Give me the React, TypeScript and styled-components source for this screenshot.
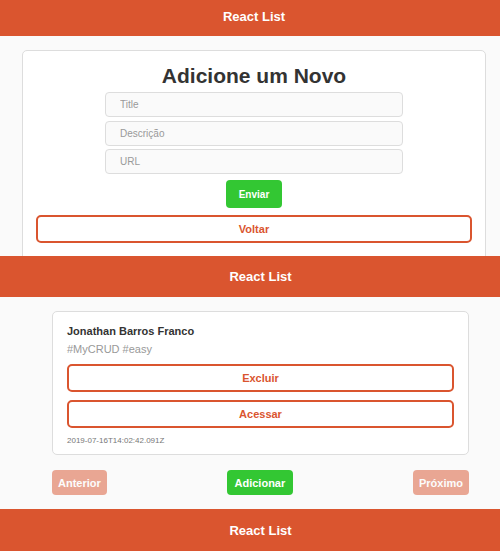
import styled, { createGlobalStyle } from 'styled-components';

const GlobalStyle = createGlobalStyle`
  * {
    box-sizing: border-box;
  }

  body {
    margin: 0;
    background: #fafafa;
    font-family: "Liberation Sans", Arial, Helvetica, sans-serif;
    overflow: hidden;
  }
`;

const Page = styled.div`
  width: 500px;
  overflow: hidden;
`;

const Section = styled.section<{ $width: number; $height?: number }>`
  width: ${p => p.$width}px;
  height: ${p => (p.$height ? `${p.$height}px` : 'auto')};
  overflow: hidden;
  display: flex;
  flex-direction: column;
`;

const Header = styled.header<{ $height: number }>`
  flex-shrink: 0;
  height: ${p => p.$height}px;
  background: #da552f;
  color: #fff;
  font-size: 13px;
  font-weight: bold;
  display: flex;
  align-items: center;
  justify-content: center;
  padding-bottom: ${p => (p.$height < 40 ? 4 : 0)}px;
`;

const Main = styled.main`
  padding: 14px 0;
  display: flex;
  flex-direction: column;
`;

const FormCard = styled.div`
  margin: 0 22px;
  background: #fff;
  border: 1px solid #ddd;
  border-radius: 5px;
  padding: 13px 13px 20px;
  display: flex;
  flex-direction: column;
  align-items: center;
`;

const Title = styled.h1`
  margin: 0 0 4px;
  font-size: 21px;
  font-weight: bold;
  color: #333;
  line-height: normal;
`;

const Fields = styled.div`
  display: flex;
  flex-direction: column;
  gap: 3.5px;
`;

const Input = styled.input`
  width: 298px;
  height: 25px;
  padding: 0 14px;
  background: #fafafa;
  border: 1px solid #ddd;
  border-radius: 4px;
  font-family: inherit;
  font-size: 10px;
  color: #444;
  outline: none;

  &::placeholder {
    color: #999;
  }
`;

const SolidButton = styled.button<{ $h: number; $px: number; $faded?: boolean }>`
  height: ${p => p.$h}px;
  padding: 0 ${p => p.$px}px;
  border: 0;
  border-radius: 4px;
  background: ${p => (p.$faded ? '#da552f' : '#33c733')};
  opacity: ${p => (p.$faded ? 0.5 : 1)};
  color: #fff;
  font-family: inherit;
  font-size: ${p => (p.$h > 26 ? 10 : 11)}px;
  font-weight: bold;
  cursor: pointer;
`;

const SubmitRow = styled.div`
  margin: 6px 0 7px;
`;

const OutlineButton = styled.button`
  width: 100%;
  height: 28px;
  background: #fff;
  border: 2px solid #da552f;
  border-radius: 5px;
  color: #da552f;
  font-family: inherit;
  font-size: 11px;
  font-weight: bold;
  cursor: pointer;
`;

const ProductCard = styled.article`
  margin: 0 52px;
  background: #fff;
  border: 1px solid #ddd;
  border-radius: 5px;
  padding: 13px 14px 8px;
  display: flex;
  flex-direction: column;
`;

const Name = styled.strong`
  font-size: 11px;
  line-height: 13px;
  color: #333;
`;

const Tags = styled.p`
  margin: 5px 0 8px;
  font-size: 11px;
  line-height: 13px;
  color: #999;
`;

const Actions = styled.div`
  display: flex;
  flex-direction: column;
  gap: 8px;
`;

const Stamp = styled.small`
  margin-top: 8px;
  font-size: 8px;
  line-height: 10px;
  color: #777;
`;

const Pager = styled.div`
  margin: 15px 52px 0;
  display: flex;
  justify-content: space-between;
`;

export default function App() {
  return (
    <Page>
      <GlobalStyle />
      <Section $width={508} $height={256}>
        <Header $height={36}>React List</Header>
        <Main>
          <FormCard>
            <Title>Adicione um Novo</Title>
            <Fields>
              <Input placeholder="Title" />
              <Input placeholder="Descrição" />
              <Input placeholder="URL" />
            </Fields>
            <SubmitRow>
              <SolidButton $h={28} $px={13}>Enviar</SolidButton>
            </SubmitRow>
            <OutlineButton>Voltar</OutlineButton>
          </FormCard>
        </Main>
      </Section>

      <Section $width={521}>
        <Header $height={41}>React List</Header>
        <Main>
          <ProductCard>
            <Name>Jonathan Barros Franco</Name>
            <Tags>#MyCRUD #easy</Tags>
            <Actions>
              <OutlineButton>Excluir</OutlineButton>
              <OutlineButton>Acessar</OutlineButton>
            </Actions>
            <Stamp>2019-07-16T14:02:42.091Z</Stamp>
          </ProductCard>
          <Pager>
            <SolidButton $h={25} $px={6} $faded disabled>Anterior</SolidButton>
            <SolidButton $h={25} $px={7.5}>Adicionar</SolidButton>
            <SolidButton $h={25} $px={6} $faded disabled>Próximo</SolidButton>
          </Pager>
        </Main>
      </Section>

      <Section $width={521}>
        <Header $height={42}>React List</Header>
      </Section>
    </Page>
  );
}
